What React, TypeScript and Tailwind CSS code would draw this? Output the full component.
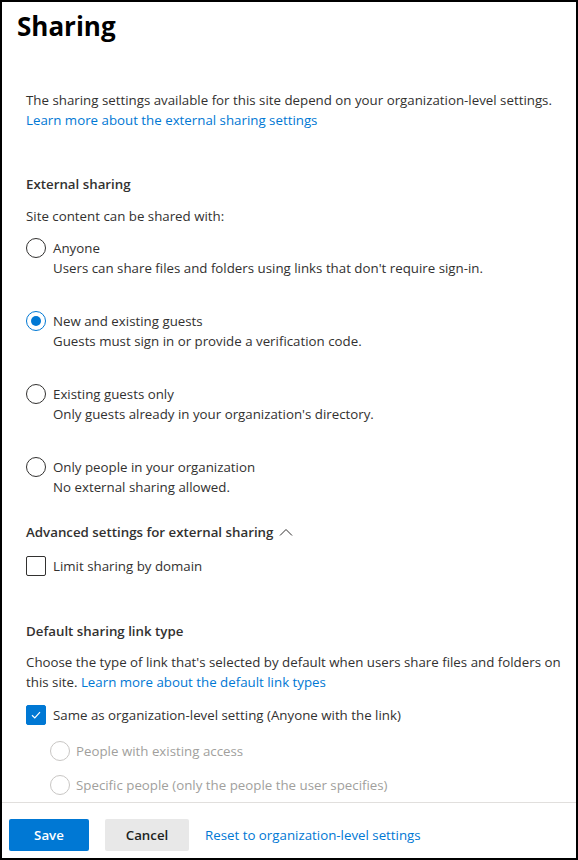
import React, { useState } from 'react';

const FONT = "font-['Open_Sans',sans-serif]";

interface RadioOption {
  id: string;
  label: string;
  description?: string;
}

const externalOptions: RadioOption[] = [
  { id: 'anyone', label: 'Anyone', description: "Users can share files and folders using links that don't require sign-in." },
  { id: 'new', label: 'New and existing guests', description: 'Guests must sign in or provide a verification code.' },
  { id: 'existing', label: 'Existing guests only', description: "Only guests already in your organization's directory." },
  { id: 'org', label: 'Only people in your organization', description: 'No external sharing allowed.' },
];

const Radio = ({ checked, disabled }: { checked: boolean; disabled?: boolean }) => (
  <span
    className={`flex h-5 w-5 shrink-0 items-center justify-center rounded-full border ${
      disabled ? 'border-[#c8c6c4]' : checked ? 'border-[#0078d4]' : 'border-[#323130]'
    }`}
  >
    {checked && <span className="h-[10px] w-[10px] rounded-full bg-[#0078d4]" />}
  </span>
);

const Checkbox = ({ checked }: { checked: boolean }) => (
  <span
    className={`flex h-5 w-5 shrink-0 items-center justify-center rounded-[2px] border ${
      checked ? 'border-[#0078d4] bg-[#0078d4]' : 'border-[#323130] bg-white'
    }`}
  >
    {checked && (
      <svg width="12" height="12" viewBox="0 0 12 12" fill="none">
        <path d="M2 6.3L4.8 9L10 3.2" stroke="white" strokeWidth="1.2" />
      </svg>
    )}
  </span>
);

export default function App() {
  const [sharing, setSharing] = useState('new');
  const [limitDomain, setLimitDomain] = useState(false);
  const [sameAsOrg, setSameAsOrg] = useState(true);

  return (
    <div className={`${FONT} flex h-[860px] w-[578px] flex-col border-2 border-black bg-white text-[13.3px] leading-5 text-[#323130]`}>
      <div className="flex-1 overflow-hidden">
        <h1 className="pl-[15px] pt-[6px] text-[26px] font-bold leading-9 text-black">Sharing</h1>

        <div className="pl-6 pr-3 pt-[46px]">
          <p>
            The sharing settings available for this site depend on your organization-level settings.
            <br />
            <a className="text-[#0078d4]">Learn more about the external sharing settings</a>
          </p>

          <h2 className="mt-[44px] font-semibold">External sharing</h2>
          <p className="mt-3">Site content can be shared with:</p>

          <div className="mt-3 flex flex-col gap-[33px]">
            {externalOptions.map((opt) => (
              <label key={opt.id} className="flex cursor-pointer gap-[7px]" onClick={() => setSharing(opt.id)}>
                <Radio checked={sharing === opt.id} />
                <span className="flex flex-col">
                  <span>{opt.label}</span>
                  <span>{opt.description}</span>
                </span>
              </label>
            ))}
          </div>

          <button className="mt-[25px] flex items-center gap-[6px] font-semibold">
            Advanced settings for external sharing
            <svg width="14" height="8" viewBox="0 0 14 8" fill="none">
              <path d="M1 7.5L7 1.5L13 7.5" stroke="#323130" strokeWidth="1" />
            </svg>
          </button>

          <label className="mt-[14px] flex cursor-pointer items-center gap-[7px]" onClick={() => setLimitDomain(!limitDomain)}>
            <Checkbox checked={limitDomain} />
            <span>Limit sharing by domain</span>
          </label>

          <h2 className="mt-[45px] font-semibold">Default sharing link type</h2>
          <p className="mt-[11px]">
            Choose the type of link that's selected by default when users share files and folders on this site.{' '}
            <a className="text-[#0078d4]">Learn more about the default link types</a>
          </p>

          <label className="mt-[13px] flex cursor-pointer items-center gap-[7px]" onClick={() => setSameAsOrg(!sameAsOrg)}>
            <Checkbox checked={sameAsOrg} />
            <span>Same as organization-level setting (Anyone with the link)</span>
          </label>

          <div className="mt-4 flex flex-col gap-[14px] pl-6 text-[#a19f9d]">
            <div className="flex items-center gap-[6px]">
              <Radio checked={false} disabled />
              <span>People with existing access</span>
            </div>
            <div className="flex items-center gap-[6px]">
              <Radio checked={false} disabled />
              <span>Specific people (only the people the user specifies)</span>
            </div>
          </div>
        </div>
      </div>

      <div className="flex h-[56px] items-start gap-4 border-t border-[#e1dfdd] px-[7px] pt-4">
        <button className="h-8 w-20 rounded-[2px] bg-[#0078d4] font-semibold text-white">Save</button>
        <button className="h-8 w-[84px] rounded-[2px] bg-[#e8e8e8] font-semibold text-[#201f1e]">Cancel</button>
        <a className="flex h-8 items-center text-[#0078d4]">Reset to organization-level settings</a>
      </div>
    </div>
  );
}
